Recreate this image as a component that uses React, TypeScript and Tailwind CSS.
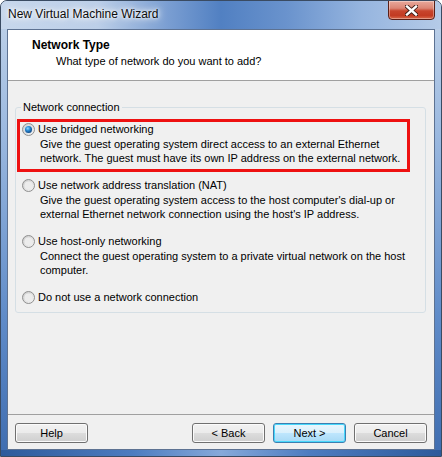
import React from "react";

const font = "font-['Liberation_Sans',Arial,sans-serif]";

type RadioProps = { checked?: boolean };

const Radio = ({ checked }: RadioProps) => {
  return (
    <svg width="13" height="13" viewBox="0 0 13 13" className="shrink-0">
      <defs>
        <linearGradient id="rb-ring" x1="0" y1="0" x2="1" y2="1">
          <stop offset="0" stopColor="#c9c9c9" />
          <stop offset="1" stopColor="#f6f6f6" />
        </linearGradient>
        <radialGradient id="rb-dot" cx="0.4" cy="0.35" r="0.7">
          <stop offset="0" stopColor="#8fd8ff" />
          <stop offset="0.45" stopColor="#2a8ad4" />
          <stop offset="1" stopColor="#0c3f7a" />
        </radialGradient>
      </defs>
      <circle cx="6.5" cy="6.5" r="6" fill="url(#rb-ring)" stroke="#8f8f8f" strokeWidth="1" />
      <circle cx="6.5" cy="6.5" r="4" fill={checked ? "#d8e6f2" : "#ececec"} />
      {checked && <circle cx="6.5" cy="6.5" r="3.5" fill="url(#rb-dot)" />}
    </svg>
  );
};

type OptionProps = {
  label: string;
  lines?: string[];
  checked?: boolean;
};

const Option = ({ label, lines, checked }: OptionProps) => {
  return (
    <div>
      <div className="flex items-center gap-[3px] h-[14px]">
        <Radio checked={checked} />
        <span className="leading-[14px]">{label}</span>
      </div>
      {lines && (
        <div className="mt-[2px] pl-[18px] leading-[13.5px]">
          {lines.map((l) => (
            <div key={l}>{l}</div>
          ))}
        </div>
      )}
    </div>
  );
};

type ButtonProps = { children: React.ReactNode; primary?: boolean };

const WinButton = ({ children, primary }: ButtonProps) => {
  return (
    <button
      className={
        primary
          ? "w-[73px] h-[20px] rounded-[3px] border border-[#3c7fb1] shadow-[inset_0_0_0_1px_#48d8fb] bg-[linear-gradient(to_bottom,#eaf6fd_0%,#d9f0fc_50%,#bee6fd_51%,#a7d9f5_100%)] text-[11px] text-black leading-none"
          : "w-[73px] h-[20px] rounded-[3px] border border-[#707070] shadow-[inset_0_0_0_1px_#fbfbfb] bg-[linear-gradient(to_bottom,#f2f2f2_0%,#ebebeb_50%,#dddddd_51%,#cfcfcf_100%)] text-[11px] text-black leading-none"
      }
    >
      {children}
    </button>
  );
};

const App = () => {
  return (
    <div className={`w-[442px] h-[457px] ${font} text-[11px] text-black bg-white`}>
      {/* WINDOW FRAME */}
      <div className="w-full h-full flex flex-col rounded-t-[7px] border border-[#3a4b62] bg-[linear-gradient(to_bottom,#c2d4ea_0%,#9ab8df_30%,#5f8bc8_70%,#3f6db0_100%)] overflow-hidden">
        {/* TITLE BAR */}
        <div className="h-[28px] flex items-start shrink-0 bg-[linear-gradient(to_right,#c7d7ec_0%,#bccfe8_22%,#7a9ed2_38%,#5180c2_50%,#6a93cd_65%,#96b5df_82%,#b5cbe8_100%)]">
          <div className="pl-[7px] pt-[6px] text-[12px] leading-[15px] text-[#0c0c0c] [text-shadow:0_0_6px_#ffffff,0_0_10px_#ffffff,0_0_3px_#ffffff]">
            New Virtual Machine Wizard
          </div>
          <div className="ml-auto mr-[6px] -mt-px w-[47px] h-[20px] rounded-b-[4px] border border-[#5a1f17] bg-[linear-gradient(to_bottom,#e9a99c_0%,#dc8574_40%,#c8452d_55%,#c23a22_80%,#d9694a_100%)] shadow-[inset_0_0_0_1px_rgba(255,255,255,0.35)] flex items-center justify-center">
            <svg width="13" height="11" viewBox="0 0 13 11">
              <path d="M2 1.5 L11 9.5 M11 1.5 L2 9.5" stroke="#3b1a14" strokeWidth="4.2" strokeLinecap="square" />
              <path d="M2 1.5 L11 9.5 M11 1.5 L2 9.5" stroke="#ffffff" strokeWidth="2.4" strokeLinecap="square" />
            </svg>
          </div>
        </div>

        {/* CLIENT AREA */}
        <div className="mx-[6px] h-[421px] shrink-0 border border-[#5d7292] bg-[#f0f0f0] flex flex-col">
          {/* HEADER */}
          <div className="h-[51px] bg-white border-b border-[#a0a0a0] shrink-0 pt-[8px]">
            <div className="pl-[24px] text-[12px] leading-[14px] font-bold">Network Type</div>
            <div className="pl-[48px] mt-[2px] leading-[14px]">What type of network do you want to add?</div>
          </div>

          {/* BODY */}
          <div className="flex-1 flex flex-col">
            <fieldset className="mt-[20px] ml-[7px] mr-[8px] h-[212px] border border-[#d5dfe5] rounded-[3px] px-0 pb-0">
              <legend className="ml-[5px] px-[2px] leading-[13px]">Network connection</legend>

              <div className="mt-[5px] ml-px w-[393px] border-[3px] border-[#ee1111] pl-[2px] pb-[4px]">
                <Option
                  checked
                  label="Use bridged networking"
                  lines={[
                    "Give the guest operating system direct access to an external Ethernet",
                    "network. The guest must have its own IP address on the external network.",
                  ]}
                />
              </div>

              <div className="ml-[6px] mt-[6px] flex flex-col gap-[13px]">
                <Option
                  label="Use network address translation (NAT)"
                  lines={[
                    "Give the guest operating system access to the host computer's dial-up or",
                    "external Ethernet network connection using the host's IP address.",
                  ]}
                />
                <Option
                  label="Use host-only networking"
                  lines={[
                    "Connect the guest operating system to a private virtual network on the host",
                    "computer.",
                  ]}
                />
                <Option label="Do not use a network connection" />
              </div>
            </fieldset>

            <div className="flex-1" />

            {/* BUTTON ROW */}
            <div className="border-t border-[#a0a0a0] pt-[8px] pb-[6px] px-[7px] flex items-center">
              <WinButton>Help</WinButton>
              <div className="ml-auto flex gap-[8px]">
                <WinButton>&lt; Back</WinButton>
                <WinButton primary>Next &gt;</WinButton>
                <WinButton>Cancel</WinButton>
              </div>
            </div>
          </div>
        </div>

        {/* BOTTOM EDGE */}
        <div className="flex-1 bg-[linear-gradient(to_right,#2d5a9b_0%,#4d7cc0_30%,#86a9da_50%,#4d7cc0_70%,#2d5a9b_100%)]" />
      </div>
    </div>
  );
};

export default App;
